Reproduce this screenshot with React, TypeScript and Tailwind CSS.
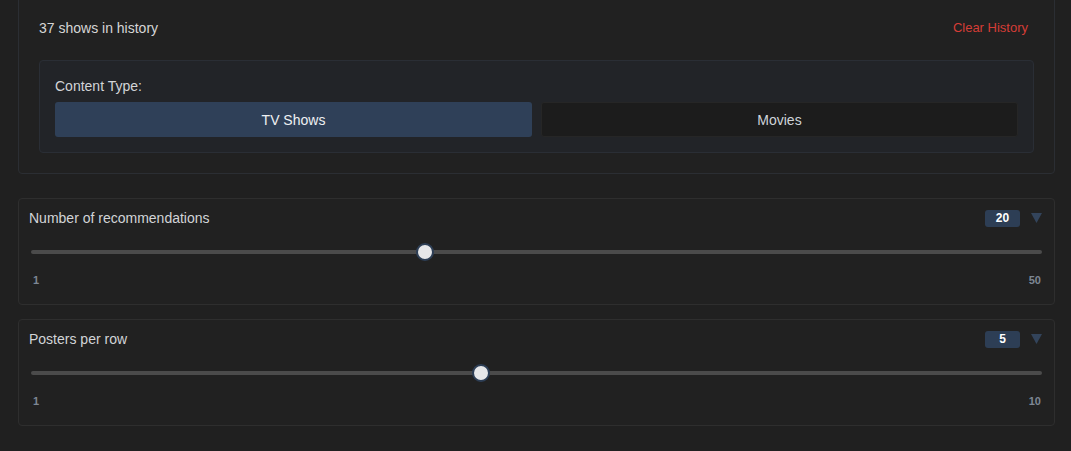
import { useState } from "react";

function Slider({
  label,
  min,
  max,
  value,
  onChange,
}: {
  label: string;
  min: number;
  max: number;
  value: number;
  onChange: (v: number) => void;
}) {
  return (
    <div className="rounded border border-[#2e2e2e] bg-[#212121] px-[10px] pt-[10px] pb-[17px]">
      <div className="flex h-[18px] items-center justify-between">
        <span className="text-sm text-[#d2d4d7]">{label}</span>
        <div className="flex items-center gap-[11px]">
          <span className="flex h-[17px] w-[35px] items-center justify-center rounded-[3px] bg-[#2d3e55] text-xs font-bold text-white">
            {value}
          </span>
          <svg width="11" height="10" viewBox="0 0 11 10" className="mr-[2px]">
            <polygon points="0,0 11,0 5.5,10" fill="#33445b" />
          </svg>
        </div>
      </div>
      <div className="mt-[16px] px-0.5">
        <input
          type="range"
          min={min}
          max={max}
          value={value}
          onChange={(e) => onChange(Number(e.target.value))}
          className="block h-[18px] w-full cursor-pointer appearance-none bg-transparent [&::-webkit-slider-runnable-track]:h-1 [&::-webkit-slider-runnable-track]:rounded-full [&::-webkit-slider-runnable-track]:bg-[#4b4b4b] [&::-webkit-slider-thumb]:-mt-[7px] [&::-webkit-slider-thumb]:h-[18px] [&::-webkit-slider-thumb]:w-[18px] [&::-webkit-slider-thumb]:appearance-none [&::-webkit-slider-thumb]:rounded-full [&::-webkit-slider-thumb]:border-2 [&::-webkit-slider-thumb]:border-[#2d3e55] [&::-webkit-slider-thumb]:bg-[#e6e7e9]"
        />
      </div>
      <div className="mt-[12px] flex justify-between pl-[4px] pr-[3px] text-[11px] font-bold leading-[14px] text-[#7d8794]">
        <span>{min}</span>
        <span>{max}</span>
      </div>
    </div>
  );
}

export default function App() {
  const [type, setType] = useState<"tv" | "movie">("tv");
  const [count, setCount] = useState(20);
  const [perRow, setPerRow] = useState(5);

  return (
    <div
      className="min-h-[451px] overflow-hidden bg-[#202020] pl-[18px] pr-4 pb-6"
      style={{ fontFamily: '"Liberation Sans", Arial, sans-serif' }}
    >
      <div className="-mt-[3px] rounded-b border border-[#2b2e33] bg-[#212121] px-5 pt-5 pb-5">
        <div className="flex h-5 items-center justify-between">
          <span className="text-sm text-[#d6d6d6]">37 shows in history</span>
          <button className="mr-1.5 text-[13px] text-[#d53d36]">Clear History</button>
        </div>
        <div className="mt-[22px] rounded border border-[#2a2e35] bg-[#222428] px-[15px] pt-[15px] pb-[15px]">
          <div className="text-sm leading-5 text-[#d2d4d7]">Content Type:</div>
          <div className="mt-[6px] grid grid-cols-2 gap-[9px]">
            <button
              onClick={() => setType("tv")}
              className={
                type === "tv"
                  ? "h-[35px] rounded-[3px] bg-[#2f4058] text-sm text-[#eef0f3]"
                  : "h-[35px] rounded-[3px] border border-[#262626] bg-[#1c1c1c] text-sm text-[#cfd4da]"
              }
            >
              TV Shows
            </button>
            <button
              onClick={() => setType("movie")}
              className={
                type === "movie"
                  ? "h-[35px] rounded-[3px] bg-[#2f4058] text-sm text-[#eef0f3]"
                  : "h-[35px] rounded-[3px] border border-[#262626] bg-[#1c1c1c] text-sm text-[#cfd4da]"
              }
            >
              Movies
            </button>
          </div>
        </div>
      </div>

      <div className="mt-6">
        <Slider label="Number of recommendations" min={1} max={50} value={count} onChange={setCount} />
      </div>
      <div className="mt-[14px]">
        <Slider label="Posters per row" min={1} max={10} value={perRow} onChange={setPerRow} />
      </div>
    </div>
  );
}
